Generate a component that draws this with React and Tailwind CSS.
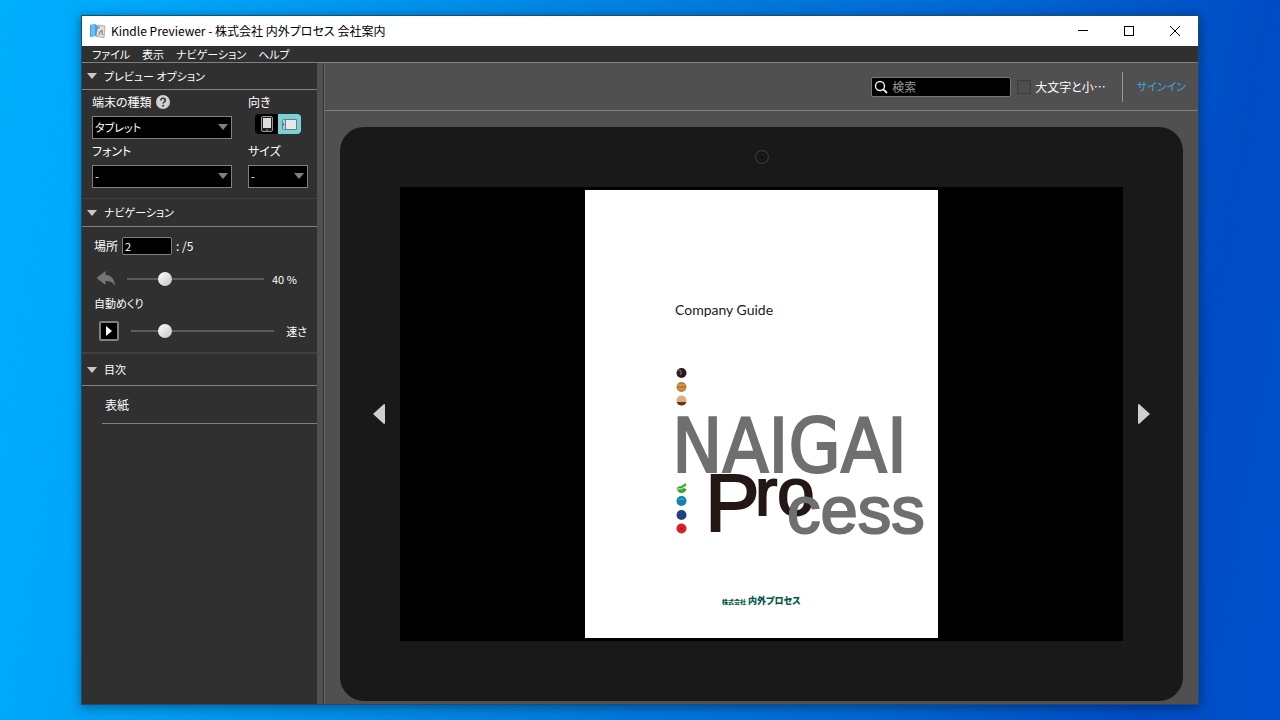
import React, { useState } from "react";

const Caret = ({ className }) => (
  <svg viewBox="0 0 10 6" className={className} aria-hidden="true">
    <path d="M0 0h10L5 6z" fill="currentColor" />
  </svg>
);

const SectionHeader = ({ title }) => (
  <button className="flex w-full items-center gap-[6px] border-b border-[#808080] px-1 text-left text-[11px]">
    <Caret className="h-[6px] w-3 text-[#c8c8c8]" />
    <span>{title}</span>
  </button>
);

const SelectBox = ({ id, label, options, children }) => (
  <div>
    <label htmlFor={id} className="flex h-6 items-center gap-1">
      {label}
      {children}
    </label>
    <div className="relative mt-[2px]">
      <select
        id={id}
        className="block h-[23px] w-full appearance-none border border-[#808080] bg-black px-[2px] text-[11px] text-white"
      >
        {options.map((option) => (
          <option key={option}>{option}</option>
        ))}
      </select>
      <Caret className="pointer-events-none absolute top-2 right-1 h-[6px] w-[10px] text-[#808080]" />
    </div>
  </div>
);

const Slider = ({ label, initial }) => {
  const [value, setValue] = useState(initial);
  return (
    <input
      type="range"
      aria-label={label}
      value={value}
      onChange={(e) => setValue(e.target.value)}
      className="h-[14px] min-w-0 flex-1 appearance-none bg-transparent [&::-webkit-slider-runnable-track]:h-[2px] [&::-webkit-slider-runnable-track]:bg-[#5c5c5c] [&::-webkit-slider-thumb]:-mt-[6px] [&::-webkit-slider-thumb]:size-[14px] [&::-webkit-slider-thumb]:appearance-none [&::-webkit-slider-thumb]:rounded-full [&::-webkit-slider-thumb]:bg-gradient-to-br [&::-webkit-slider-thumb]:from-white [&::-webkit-slider-thumb]:to-[#c4c4c4]"
    />
  );
};

const AppLogo = () => (
  <svg viewBox="0 0 16 16" className="size-4" aria-hidden="true">
    <path d="M0 2l5-1 3 2v11l-3-1-5 1z" fill="#3b9ee6" />
    <path d="M1 2l4-1v12l-4 1z" fill="#6dbcf5" />
    <path d="M8 2l7 1-1 12-8-2z" fill="#dededb" stroke="#8a8a8a" strokeWidth=".6" />
    <path d="M9 12l1-3 2-2v3l1 2M8 5l2-1" fill="none" stroke="#777" strokeWidth="1" />
  </svg>
);

const TitleBar = () => (
  <header className="flex h-[30px] shrink-0 items-center bg-white text-black">
    <div className="flex flex-1 items-center gap-[5px] pl-2">
      <AppLogo />
      <h1>Kindle Previewer - 株式会社 内外プロセス 会社案内</h1>
    </div>
    <button aria-label="最小化" className="flex h-full w-[46px] items-center justify-center">
      <svg viewBox="0 0 10 10" className="size-[10px]" shapeRendering="crispEdges">
        <path d="M0 4.500h10" stroke="#000" />
      </svg>
    </button>
    <button aria-label="最大化" className="flex h-full w-[46px] items-center justify-center">
      <svg viewBox="0 0 10 10" className="size-[10px]" shapeRendering="crispEdges">
        <path d="M.5.5h9v9h-9z" fill="none" stroke="#000" />
      </svg>
    </button>
    <button aria-label="閉じる" className="flex h-full w-[46px] items-center justify-center">
      <svg viewBox="0 0 10 10" className="size-[10px]">
        <path d="M0 0l10 10M10 0L0 10" stroke="#000" />
      </svg>
    </button>
  </header>
);

const menus = ["ファイル", "表示", "ナビゲーション", "ヘルプ"];

const MenuBar = () => (
  <nav className="flex h-[17px] shrink-0 items-center gap-3 border-b border-[#808080] pl-[10px] text-[11px] leading-4">
    {menus.map((menu) => (
      <button key={menu}>{menu}</button>
    ))}
  </nav>
);

const PreviewOptions = () => (
  <section>
    <div className="flex h-[27px] items-stretch">
      <SectionHeader title="プレビュー オプション" />
    </div>
    <div className="flex gap-4 pr-[9px] pb-[10px] pl-[10px]">
      <div className="flex flex-1 flex-col">
        <SelectBox id="device" label="端末の種類" options={["タブレット", "スマートフォン"]}>
          <svg viewBox="0 0 14 14" className="size-[14px]" aria-hidden="true">
            <circle cx="7" cy="7" r="7" fill="#d0d0d0" />
            <path d="M4.7 5.4c0-3 4.6-2.900 4.600 0 0 1.600-2.200 1.600-2.200 3.200" fill="none" stroke="#303030" strokeWidth="1.500" />
            <circle cx="7.100" cy="10.700" r="1" fill="#303030" />
          </svg>
        </SelectBox>
        <SelectBox id="font" label="フォント" options={["-"]} />
      </div>
      <div className="w-[60px]">
        <div className="flex h-6 items-center">向き</div>
        <div className="flex h-[25px] items-start justify-center">
          <button aria-label="縦" className="flex h-5 w-[23px] items-center justify-center rounded-l-[4px] bg-black">
            <svg viewBox="0 0 12 16" className="h-4 w-3">
              <rect x=".5" y=".5" width="11" height="15" rx="1.500" fill="#222" stroke="#999" />
              <path d="M2 2h8v10H2z" fill="#ddd" />
              <path d="M5 14h2" stroke="#999" />
            </svg>
          </button>
          <button aria-label="横" className="flex h-5 w-[23px] items-center justify-center rounded-r-[4px] bg-[#76d3d8]">
            <svg viewBox="0 0 15 11" className="h-[11px] w-[15px]">
              <path d="M3.500.5h11v10h-11z" fill="#e8e8e8" stroke="#777" />
              <path d="M3 .5H1.500q-1 0-1 1v8q0 1 1 1H3" fill="#9adde0" stroke="#777" />
              <path d="M1.500 4.500v2" stroke="#555" />
            </svg>
          </button>
        </div>
        <SelectBox id="size" label="サイズ" options={["-"]} />
      </div>
    </div>
  </section>
);

const Navigation = () => (
  <section className="border-t border-[#404040]">
    <div className="flex h-7 items-stretch">
      <SectionHeader title="ナビゲーション" />
    </div>
    <div className="flex flex-col pt-2 pr-[10px] pb-[3px] pl-3">
      <div className="flex h-[22px] items-center gap-1">
        <label htmlFor="location">場所</label>
        <input
          id="location"
          type="text"
          defaultValue="2"
          className="h-[18px] w-[50px] rounded-[2px] border border-[#808080] bg-black px-[2px] text-[11px]"
        />
        <span>: /5</span>
      </div>
      <div className="mt-2 flex h-7 items-center gap-2">
        <button aria-label="戻る" className="w-[25px] pl-[2px]">
          <svg viewBox="0 0 19 16" className="h-4 w-5">
            <path d="M0 7L9 0v4c6 0 9 4 9.500 11-2-4-5-5-9.500-5v4z" fill="#757575" />
          </svg>
        </button>
        <Slider label="場所" initial={25} />
        <span className="w-[35px] text-[11px]">40 %</span>
      </div>
      <div className="flex h-5 items-center text-[11px]">自動めくり</div>
      <div className="flex h-9 items-center gap-3 pl-[5px]">
        <button aria-label="再生" className="flex size-5 items-center justify-center rounded-[2px] border-2 border-[#808080] bg-black">
          <svg viewBox="0 0 6 10" className="h-[10px] w-[6px]">
            <path d="M0 0l6 5-6 5z" fill="#fff" />
          </svg>
        </button>
        <Slider label="速さ" initial={21} />
        <span className="text-[11px]">速さ</span>
      </div>
    </div>
  </section>
);

const Contents = () => (
  <section className="border-t-2 border-[#404040]">
    <div className="flex h-8 items-stretch">
      <SectionHeader title="目次" />
    </div>
    <ul className="pl-5">
      <li className="border-b border-[#808080]">
        <a href="#cover" className="flex h-[37px] items-center pl-[3px]">
          表紙
        </a>
      </li>
    </ul>
  </section>
);

const Toolbar = () => (
  <div className="flex h-12 shrink-0 items-center justify-end border-b border-[#808080] pr-3">
    <div className="flex h-5 w-[140px] items-center gap-1 rounded-[2px] border border-[#777] bg-black pl-[2px]">
      <svg viewBox="0 0 14 14" className="size-[14px] shrink-0" aria-hidden="true">
        <circle cx="6" cy="6" r="4.500" fill="none" stroke="#eee" strokeWidth="1.400" />
        <path d="M9.300 9.300L13 13" stroke="#eee" strokeWidth="1.800" />
      </svg>
      <input
        type="search"
        aria-label="検索"
        placeholder="検索"
        className="w-full min-w-0 bg-transparent outline-none placeholder:text-[#999]"
      />
    </div>
    <label className="ml-[6px] flex items-center gap-1">
      <input type="checkbox" className="size-[14px] appearance-none border border-[#3c3c3c] bg-[#4d4d4d]" />
      大文字と小…
    </label>
    <a href="#signin" className="ml-4 flex h-[30px] items-center border-l border-[#999] pl-[14px] text-[11px] text-[#3aa5e8]">
      サインイン
    </a>
  </div>
);

const Cover = () => (
  <svg id="cover" viewBox="0 0 353 448" className="h-full max-w-full bg-white" role="img" aria-label="Company Guide">
    <text x="90" y="125" fill="#231815" className="font-['Lato',sans-serif] text-[14px]">
      Company Guide
    </text>

    <circle cx="96.500" cy="183" r="5" fill="#2a1c1a" />
    <path d="M93 181q2-2 3 0t-1 4" fill="none" stroke="#8b807a" />
    <circle cx="96.500" cy="197" r="5" fill="#b87a34" />
    <path d="M92 195h8M93 199h7" stroke="#e0a95e" />
    <circle cx="96.500" cy="210.500" r="5" fill="#dcae78" />
    <path d="M91.700 212h9.600a5 5 0 0 1-9.600 0z" fill="#6b3218" />

    <path d="M91.500 298q2-2 5-2l4-3 1 3-3 2 3 1q-1 4-5 4-4 0-5-5z" fill="#3fa535" />
    <path d="M92 299q5 1 9-3" fill="none" stroke="#d6efc2" />
    <circle cx="96.500" cy="311" r="5" fill="#137fb0" />
    <path d="M94 310q3-3 5 0" fill="none" stroke="#5bc4e4" />
    <circle cx="96.500" cy="325" r="5" fill="#1d4480" />
    <circle cx="96.500" cy="338.500" r="5" fill="#dc1f26" />
    <circle cx="96.500" cy="338.500" r="1" fill="#7c1015" />

    <g strokeWidth="2" className="font-['Liberation_Sans',sans-serif]">
      <text
        x="87"
        y="282"
        fill="#6f6f6f"
        stroke="#6f6f6f"
        className="font-['DejaVu_Sans_Condensed','Liberation_Sans',sans-serif] text-[75px]"
      >
        NAIGAI
      </text>
      <text x="120" y="341" fill="#231815" stroke="#231815" className="text-[82px]">P</text>
      <text x="170" y="325" fill="#231815" stroke="#231815" className="text-[67px]">ro</text>
      <text x="202" y="343" fill="#6f6f6f" stroke="#6f6f6f" className="text-[67px]">cess</text>
    </g>

    <g fill="#005a46" className="font-['Noto_Sans_CJK_JP',sans-serif] font-black">
      <text x="137" y="414" className="text-[6px]">株式会社</text>
      <text x="163" y="414" className="text-[9px]">内外プロセス</text>
    </g>
  </svg>
);

const Device = () => (
  <div className="flex min-h-0 flex-1 flex-col rounded-3xl bg-[#191919]">
    <div className="flex h-[60px] shrink-0 items-center justify-center">
      <svg viewBox="0 0 16 16" className="size-4" aria-hidden="true">
        <circle cx="8" cy="8" r="6.500" fill="#161616" stroke="#333" strokeWidth="1.400" />
        <circle cx="8" cy="8" r="2.500" fill="#101010" stroke="#202020" />
      </svg>
    </div>
    <div className="flex min-h-0 flex-1">
      <button aria-label="前のページ" className="flex w-[60px] items-center justify-end pr-[15px]">
        <svg viewBox="0 0 12 20" className="h-5 w-3">
          <path d="M12 1v18q0 1-1 1L0 10 11 0q1 0 1 1z" fill="#cfcfcf" />
        </svg>
      </button>
      <div className="flex min-w-0 flex-1 justify-center bg-black py-[3px]">
        <Cover />
      </div>
      <button aria-label="次のページ" className="flex w-[60px] items-center pl-[15px]">
        <svg viewBox="0 0 12 20" className="h-5 w-3">
          <path d="M0 1v18q0 1 1 1l11-10L1 0Q0 0 0 1z" fill="#cfcfcf" />
        </svg>
      </button>
    </div>
    <div className="h-[60px] shrink-0" />
  </div>
);

const App = () => {
  return (
    <div
      lang="ja"
      className="flex h-screen bg-[linear-gradient(100deg,#00aefc_0%,#00a8fa_10%,#0086e2_40%,#0068d4_70%,#004cc4_90%,#0050cc_100%)] px-[82px] py-4 font-['Noto_Sans_CJK_JP',sans-serif] text-xs text-white [font-feature-settings:'palt']"
    >
      <div className="flex min-w-0 flex-1 flex-col bg-[#303030] shadow-[0_0_0_1px_#1b4c78,0_2px_10px_2px_rgba(0,0,0,0.35)]">
        <TitleBar />
        <MenuBar />
        <div className="flex min-h-0 flex-1">
          <aside className="w-[235px] shrink-0">
            <PreviewOptions />
            <Navigation />
            <Contents />
          </aside>
          <div className="w-[7px] shrink-0 border-r border-[#333] bg-[#505050]" />
          <main className="flex min-w-0 flex-1 flex-col border-l border-[#6a6a6a] bg-[#505050]">
            <Toolbar />
            <div className="flex min-h-0 flex-1 flex-col px-[15px] pt-4 pb-[3px]">
              <Device />
            </div>
          </main>
        </div>
      </div>
    </div>
  );
};

export default App;
